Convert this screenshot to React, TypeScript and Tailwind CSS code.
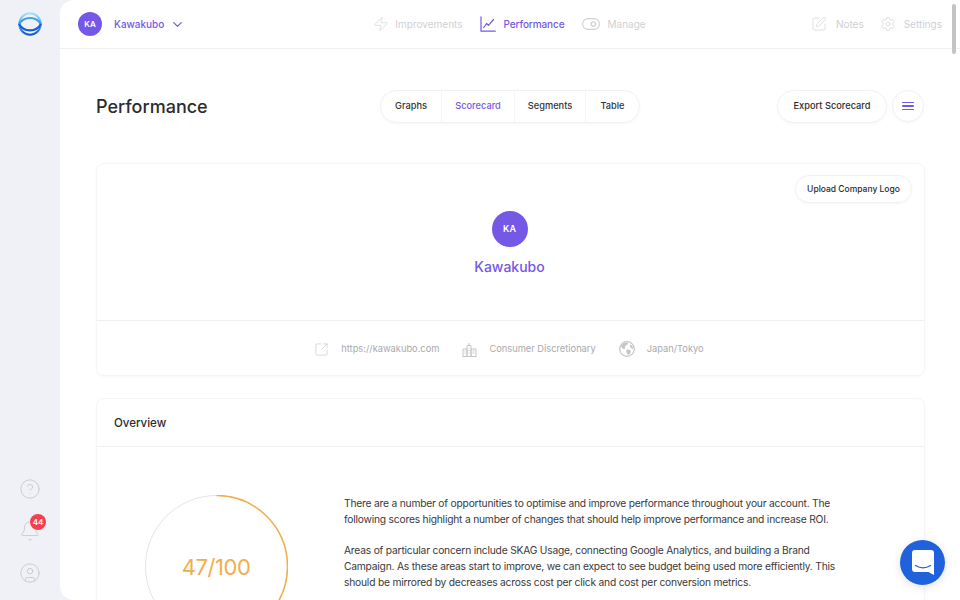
import { Zap, SquarePen, Settings, CircleHelp, Bell, CircleUser, SquareArrowOutUpRight, ChevronDown } from "lucide-react";

function Logo() {
    return <svg width="24" height="24" viewBox="0 0 24 24" fill="none">
        <defs>
            <linearGradient id="ring" x1="0" y1="0" x2="0" y2="1">
                <stop offset="0" stopColor="#a5e0f8" />
                <stop offset="0.5" stopColor="#4fb0ee" />
                <stop offset="1" stopColor="#0f55cf" />
            </linearGradient>
        </defs>
        <circle cx="12" cy="12" r="10.700" stroke="url(#ring)" strokeWidth="2" />
        <path d="M1 12.500C3.500 7.800 7.500 6 12 6s8.500 1.800 11 6.500" stroke="#3d9eea" strokeWidth="2.200" />
        <path d="M1 12c2.500 4.500 6.500 6.300 11 6.300S20.500 16.500 23 12" stroke="#1360d6" strokeWidth="2.200" />
    </svg>;
}

function ChartIcon() {
    return <svg width="16" height="16" viewBox="0 0 16 16" fill="none" stroke="#7558e6" strokeWidth="1.200" strokeLinecap="round" strokeLinejoin="round">
        <path d="M1 0.800v14.400h14.300" />
        <path d="M3.800 11.500l2.700-4 2 1.800L13.500 3.500" />
    </svg>;
}

function ToggleIcon() {
    return <svg width="18" height="12" viewBox="0 0 18 12" fill="none" stroke="#cfd0d4" strokeWidth="1.100">
        <rect x="0.600" y="0.600" width="16.800" height="10.800" rx="5.400" />
        <circle cx="11.500" cy="6" r="2.300" />
    </svg>;
}

function BuildingIcon() {
    return <svg width="15" height="15" viewBox="0 0 15 15" fill="none" stroke="#c4c5c8" strokeWidth="1">
        <path d="M1 14V7h4v7M5 14V3.500h4V14M9 14V7h5v7M0.500 14.500h14M7 3.500V1M2.500 9h1M2.500 11h1M6.500 6h1M6.500 8.500h1M6.500 11h1M10.500 9h2M10.500 11h2" />
    </svg>;
}

function GlobeIcon() {
    return <svg width="16" height="16" viewBox="0 0 16 16" fill="none">
        <circle cx="8" cy="8" r="7.300" stroke="#c4c5c8" strokeWidth="1.200" />
        <path d="M2 5c1.500-2.500 4-3.500 6.500-3.500 1 1 .5 2-1 2.500S6 5.500 6 7 3.500 8 3 7 2.500 6 2 5z" fill="#c4c5c8" />
        <path d="M7.500 9c1.500-.8 3-.5 4 .5s-.5 4-2.500 4.500c-.5-1.500-2.500-3.500-1.500-5z" fill="#c4c5c8" />
        <path d="M11.500 3.500c1.500 1 2.500 2.500 2.800 4-1.500.5-2.800-.5-3.300-2s0-1.500.5-2z" fill="#c4c5c8" />
    </svg>;
}

function ChatIcon() {
    return <svg width="22" height="25" viewBox="0 0 22 25" fill="none">
        <path d="M3 0h16a3 3 0 0 1 3 3v22l-5.500-3H3a3 3 0 0 1-3-3V3a3 3 0 0 1 3-3z" fill="#fff" />
        <path d="M3.500 15.500c4.500 2.800 10.500 2.800 15 0" stroke="#1f62dc" strokeWidth="1.300" strokeLinecap="round" />
    </svg>;
}

function NavItem(props: { icon: React.ReactNode; text: string; active?: boolean; className?: string }) {
    return <div className={`flex items-center ${props.className ?? ""}`}>
        {props.icon}
        <span className={props.active ? "text-[10px] font-medium tracking-[-0.01em] text-[#7558e6]" : "text-[10px] text-[#cfd0d4]"}>{props.text}</span>
    </div>;
}

function FooterItem(props: { icon: React.ReactNode; text: string }) {
    return <div className="flex items-center">
        {props.icon}
        <span className="ml-[12px] text-[9.300px] text-[#a9aaae]">{props.text}</span>
    </div>;
}

const tabs = [
    { name: "Graphs", width: "w-[61px]" },
    { name: "Scorecard", width: "w-[73px]", active: true },
    { name: "Segments", width: "w-[71px]" },
    { name: "Table", width: "w-[53px]", last: true },
];

export default function App() {
    return <div className="relative flex h-[600px] w-[960px] overflow-hidden bg-[#eff1f6] font-['Inter',sans-serif] text-[#2b2b2e]">
        <aside className="flex w-[60px] shrink-0 flex-col items-center justify-between pb-[16px] pt-[12px]">
            <Logo />
            <div className="flex flex-col items-center gap-[20px]">
                <CircleHelp size={22} strokeWidth={1} color="#c6c8cd" />
                <div className="relative">
                    <Bell size={22} strokeWidth={1} color="#c6c8cd" />
                    <span className="absolute -right-[5px] -top-[6px] flex h-[16px] w-[16px] items-center justify-center rounded-full bg-[#f43f4e] text-[8px] font-semibold text-white">44</span>
                </div>
                <CircleUser size={22} strokeWidth={1} color="#c6c8cd" />
            </div>
        </aside>

        <main className="flex-1 overflow-hidden rounded-l-[14px] bg-white">
            <header className="flex h-[49px] items-center border-b border-[#efeff1] pl-[18px] pr-[18px]">
                <div className="flex items-center">
                    <div className="flex h-[24px] w-[24px] items-center justify-center rounded-full bg-[#7558e6] text-[8px] font-semibold text-white">KA</div>
                    <span className="ml-[12px] text-[10px] font-medium text-[#7558e6]">Kawakubo</span>
                    <ChevronDown size={15} strokeWidth={2} color="#7558e6" className="ml-[6px]" />
                </div>
                <div className="ml-[188px] flex items-center">
                    <NavItem icon={<Zap size={16} strokeWidth={1} color="#cfd0d4" className="mr-[6px]" />} text="Improvements" />
                    <NavItem className="ml-[17px]" active icon={<span className="mr-[8px] flex"><ChartIcon /></span>} text="Performance" />
                    <NavItem className="ml-[18px]" icon={<span className="mr-[7px] flex"><ToggleIcon /></span>} text="Manage" />
                </div>
                <div className="ml-auto flex items-center">
                    <NavItem icon={<SquarePen size={16} strokeWidth={1} color="#cfd0d4" className="mr-[9px]" />} text="Notes" />
                    <NavItem className="ml-[16px]" icon={<Settings size={16} strokeWidth={1} color="#cfd0d4" className="mr-[8px]" />} text="Settings" />
                </div>
            </header>

            <div className="pl-[36px] pr-[35px] pt-[41px]">
                <div className="flex h-[32px] items-center pr-[1px]">
                    <h1 className="w-[284px] pt-[1px] text-[18px] font-medium leading-none text-[#2b2b2e]">Performance</h1>
                    <div className="flex h-[33px] rounded-full border border-[#f1f1f3] shadow-[0_1px_3px_rgba(0,0,0,0.04)]">
                        {tabs.map((tab) => <div
                            key={tab.name}
                            className={`flex items-center justify-center text-[9.250px] font-medium ${tab.width} ${tab.last ? "" : "border-r border-[#f5f5f7]"} ${tab.active ? "text-[#7558e6]" : "text-[#333336]"}`}>
                            {tab.name}
                        </div>)}
                    </div>
                    <div className="ml-auto flex items-center gap-[5px]">
                        <div className="flex h-[33px] w-[110px] items-center justify-center rounded-full border border-[#f1f1f3] text-[9.250px] font-medium shadow-[0_1px_3px_rgba(0,0,0,0.04)]">Export Scorecard</div>
                        <div className="flex h-[32px] w-[32px] flex-col items-center justify-center gap-[2.500px] rounded-full border border-[#f1f1f3] shadow-[0_1px_3px_rgba(0,0,0,0.04)]">
                            <span className="h-[1.200px] w-[12px] rounded bg-[#7558e6]" />
                            <span className="h-[1.200px] w-[12px] rounded bg-[#7558e6]" />
                            <span className="h-[1.200px] w-[12px] rounded bg-[#7558e6]" />
                        </div>
                    </div>
                </div>

                <section className="mt-[41px] h-[213px] rounded-[8px] border border-[#f5f5f7] shadow-[0_1px_3px_rgba(0,0,0,0.03)]">
                    <div className="relative flex h-[157px] flex-col items-center border-b border-[#f0f0f2] pr-[2px] pt-[47px]">
                        <div className="absolute right-[12px] top-[11px] flex h-[28px] w-[117px] items-center justify-center rounded-full border border-[#f1f1f3] text-[8.500px] font-medium shadow-[0_1px_3px_rgba(0,0,0,0.04)]">Upload Company Logo</div>
                        <div className="flex h-[36px] w-[36px] items-center justify-center rounded-full bg-[#7558e6] text-[9px] font-semibold text-white">KA</div>
                        <div className="mt-[11px] text-[14px] font-medium leading-[18px] text-[#7558e6]">Kawakubo</div>
                    </div>
                    <div className="flex h-[55px] items-center justify-center gap-[23px] pr-[3px] pt-[1px]">
                        <FooterItem icon={<SquareArrowOutUpRight size={15} strokeWidth={1} color="#c4c5c8" />} text="https://kawakubo.com" />
                        <FooterItem icon={<BuildingIcon />} text="Consumer Discretionary" />
                        <FooterItem icon={<GlobeIcon />} text="Japan/Tokyo" />
                    </div>
                </section>

                <section className="mt-[22px] h-[300px] rounded-[8px] border border-[#f5f5f7] shadow-[0_1px_3px_rgba(0,0,0,0.03)]">
                    <div className="flex h-[48px] items-center border-b border-[#f0f0f2] pl-[17px] pt-[3px] text-[11.500px] font-medium">Overview</div>
                    <div className="flex pl-[47.500px] pt-[48px]">
                        <div className="relative h-[143px] w-[143px] shrink-0">
                            <svg width="143" height="143" viewBox="0 0 143 143" fill="none" className="-rotate-90">
                                <circle cx="71.500" cy="71.500" r="71" stroke="#e4e4e6" strokeWidth="1" />
                                <circle cx="71.500" cy="71.500" r="71" stroke="#f2ae4a" strokeWidth="1.500" pathLength="100" strokeDasharray="47 100" />
                            </svg>
                            <div className="absolute inset-0 flex items-center justify-center pt-[2px] text-[22px] font-normal tracking-[-0.02em] text-[#f2ae4a]">47/100</div>
                        </div>
                        <div className="ml-[56.500px] w-[494px] text-[10.250px] leading-[16px] tracking-[-0.02em] text-[#38383b]">
                            <p>There are a number of opportunities to optimise and improve performance throughout your account. The following scores highlight a number of changes that should help improve performance and increase ROI.</p>
                            <p className="mt-[15px]">Areas of particular concern include SKAG Usage, connecting Google Analytics, and building a Brand Campaign. As these areas start to improve, we can expect to see budget being used more efficiently. This should be mirrored by decreases across cost per click and cost per conversion metrics.</p>
                        </div>
                    </div>
                </section>
            </div>
        </main>

        <div className="absolute right-[4px] top-[4px] h-[50px] w-[4px] rounded-full bg-[#c4c4c6]" />
        <div className="absolute bottom-[15px] right-[15px] flex h-[45px] w-[45px] items-center justify-center rounded-full bg-[#1f62dc] shadow-[0_2px_10px_rgba(0,0,0,0.12)]">
            <ChatIcon />
        </div>
    </div>;
}
